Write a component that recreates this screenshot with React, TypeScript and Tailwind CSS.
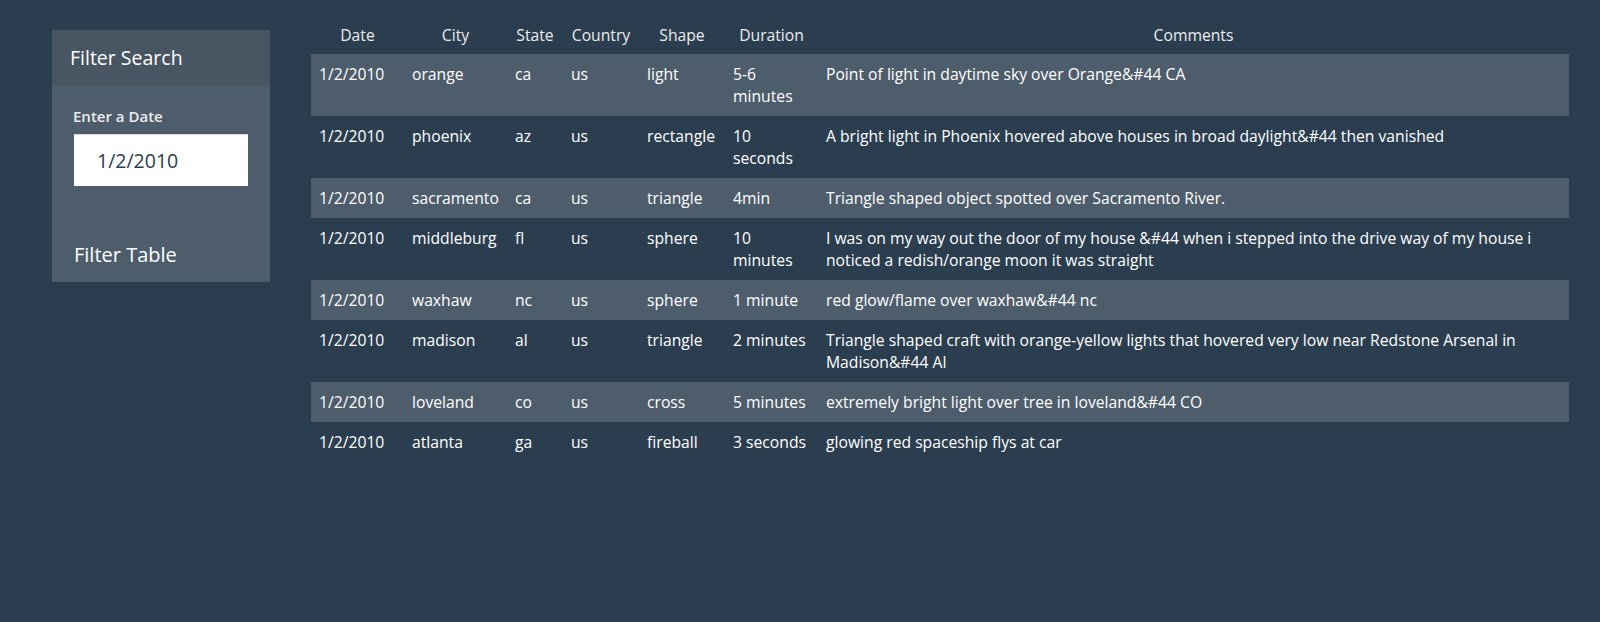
import React from 'react';

interface Sighting {
  date: string;
  city: string;
  state: string;
  country: string;
  shape: string;
  duration: string;
  comments: string;
}

const rows: Sighting[] = [
  { date: '1/2/2010', city: 'orange', state: 'ca', country: 'us', shape: 'light', duration: '5-6 minutes', comments: 'Point of light in daytime sky over Orange&#44 CA' },
  { date: '1/2/2010', city: 'phoenix', state: 'az', country: 'us', shape: 'rectangle', duration: '10 seconds', comments: 'A bright light in Phoenix hovered above houses in broad daylight&#44 then vanished' },
  { date: '1/2/2010', city: 'sacramento', state: 'ca', country: 'us', shape: 'triangle', duration: '4min', comments: 'Triangle shaped object spotted over Sacramento River.' },
  { date: '1/2/2010', city: 'middleburg', state: 'fl', country: 'us', shape: 'sphere', duration: '10 minutes', comments: 'I was on my way out the door of my house &#44 when i stepped into the drive way of my house i noticed a redish/orange moon it was straight' },
  { date: '1/2/2010', city: 'waxhaw', state: 'nc', country: 'us', shape: 'sphere', duration: '1 minute', comments: 'red glow/flame over waxhaw&#44 nc' },
  { date: '1/2/2010', city: 'madison', state: 'al', country: 'us', shape: 'triangle', duration: '2 minutes', comments: 'Triangle shaped craft with orange-yellow lights that hovered very low near Redstone Arsenal in Madison&#44 Al' },
  { date: '1/2/2010', city: 'loveland', state: 'co', country: 'us', shape: 'cross', duration: '5 minutes', comments: 'extremely bright light over tree in loveland&#44 CO' },
  { date: '1/2/2010', city: 'atlanta', state: 'ga', country: 'us', shape: 'fireball', duration: '3 seconds', comments: 'glowing red spaceship flys at car' },
];

export default function App() {
  return (
    <div className="min-h-[622px] bg-[#2b3e50] text-white font-['Open_Sans',sans-serif] flex pl-[52px] pr-[31px] pt-[16px]">
      {/* Filter panel */}
      <div className="w-[218px] shrink-0 mt-[14px] self-start bg-[#4e5d6c]">
        <div className="h-14 bg-[#485563] flex items-center px-[18px]">
          <h3 className="text-[19.5px] leading-none -mt-[1px]">Filter Search</h3>
        </div>
        <div className="px-[22px] pt-[20px] pb-1">
          <label className="block -ml-[1px] text-[15px] leading-5 font-semibold text-[#ebebeb]">Enter a Date</label>
          <input
            className="mt-[8px] block w-[174px] h-[52px] bg-white text-[#2b3e50] text-[19.5px] px-[23px] border-t border-[#dcdcdc] outline-none"
            defaultValue="1/2/2010"
          />
          <button className="mt-[46px] h-[46px] -ml-[2px] px-[2px] text-[20px] leading-none font-medium text-white">
            Filter Table
          </button>
        </div>
      </div>

      {/* Sightings table */}
      <div className="flex-1 ml-[41px]">
        <table className="w-full table-fixed border-collapse text-[15.7px] leading-[22px]">
          <thead>
            <tr className="text-[#ebebeb]">
              <th className="w-[93px] py-2 px-2 font-normal text-center">Date</th>
              <th className="w-[103px] py-2 px-2 font-normal text-center">City</th>
              <th className="w-[56px] py-2 px-2 font-normal text-center">State</th>
              <th className="w-[76px] py-2 px-2 font-normal text-center">Country</th>
              <th className="w-[86px] py-2 px-2 font-normal text-center">Shape</th>
              <th className="w-[93px] py-2 px-2 font-normal text-center">Duration</th>
              <th className="py-2 px-2 font-normal text-center">Comments</th>
            </tr>
          </thead>
          <tbody>
            {rows.map((r, i) => (
              <tr key={i} className={i % 2 === 0 ? 'bg-[#4e5d6c]' : ''}>
                <td className="align-top py-[9px] px-2">{r.date}</td>
                <td className="align-top py-[9px] px-2">{r.city}</td>
                <td className="align-top py-[9px] px-2">{r.state}</td>
                <td className="align-top py-[9px] px-2">{r.country}</td>
                <td className="align-top py-[9px] px-2">{r.shape}</td>
                <td className="align-top py-[9px] px-2">{r.duration}</td>
                <td className="align-top py-[9px] px-2">{r.comments}</td>
              </tr>
            ))}
          </tbody>
        </table>
      </div>
    </div>
  );
}
